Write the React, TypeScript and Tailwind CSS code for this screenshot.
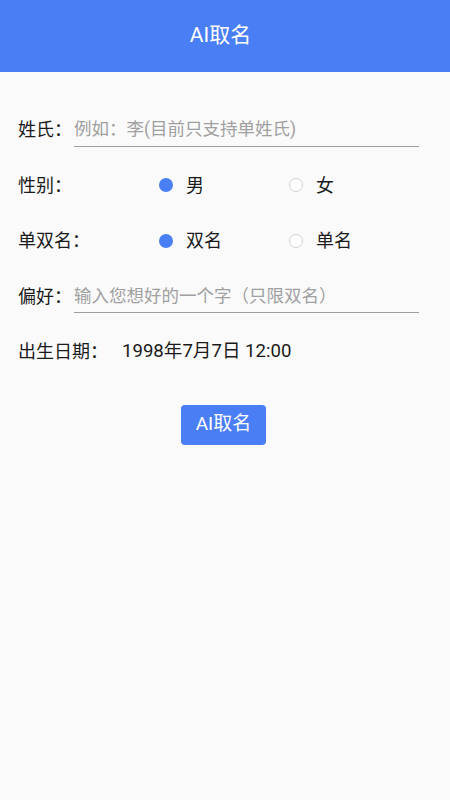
import React from "react";

function Radio({ checked, label }: { checked: boolean; label: string }) {
  return (
    <div className="flex items-center w-[130px]">
      {checked ? (
        <span className="block w-[14px] h-[14px] rounded-full bg-[#4a7ef5]" />
      ) : (
        <span className="block w-[14px] h-[14px] rounded-full border border-[#d0d0d0] bg-white" />
      )}
      <span className="ml-[13px] text-[18px] text-[#1a1a1a]">{label}</span>
    </div>
  );
}

export default function App() {
  return (
    <div
      className="w-[450px] h-[800px] bg-[#fafafa] flex flex-col"
      style={{ fontFamily: "Roboto, 'Noto Sans CJK SC', sans-serif" }}
    >
      <div className="h-[72px] bg-[#4a7ef5] flex items-center justify-center pr-[9px]">
        <span className="text-white text-[21px]">AI取名</span>
      </div>
      <div className="pt-[30px] pl-[18px] pr-[31px] flex flex-col">
        <div className="h-[55.5px] flex items-center">
          <span className="text-[18px] text-[#1a1a1a] w-[56px] shrink-0">姓氏：</span>
          <div className="flex-1 h-[34px] border-b border-[#9e9e9e] flex items-center">
            <span className="text-[17.5px] text-[#a0a0a0]">例如：李(目前只支持单姓氏)</span>
          </div>
        </div>
        <div className="h-[55.5px] flex items-center">
          <span className="text-[18px] text-[#1a1a1a] w-[141px] shrink-0">性别：</span>
          <Radio checked label="男" />
          <Radio checked={false} label="女" />
        </div>
        <div className="h-[55.5px] flex items-center">
          <span className="text-[18px] text-[#1a1a1a] w-[141px] shrink-0">单双名：</span>
          <Radio checked label="双名" />
          <Radio checked={false} label="单名" />
        </div>
        <div className="h-[55.5px] flex items-center">
          <span className="text-[18px] text-[#1a1a1a] w-[56px] shrink-0">偏好：</span>
          <div className="flex-1 h-[34px] border-b border-[#9e9e9e] flex items-center">
            <span className="text-[17.5px] text-[#a0a0a0]">输入您想好的一个字（只限双名）</span>
          </div>
        </div>
        <div className="h-[55.5px] flex items-center">
          <span className="text-[18px] text-[#1a1a1a] w-[104px] shrink-0">出生日期：</span>
          <span className="text-[18.6px] text-[#1a1a1a]">1998年7月7日 12:00</span>
        </div>
      </div>
      <div className="flex justify-center mt-[25px] pr-[3px]">
        <div className="w-[85px] h-[40px] rounded-[4px] bg-[#4a7ef5] flex items-center justify-center text-white text-[19px]">
          AI取名
        </div>
      </div>
    </div>
  );
}
